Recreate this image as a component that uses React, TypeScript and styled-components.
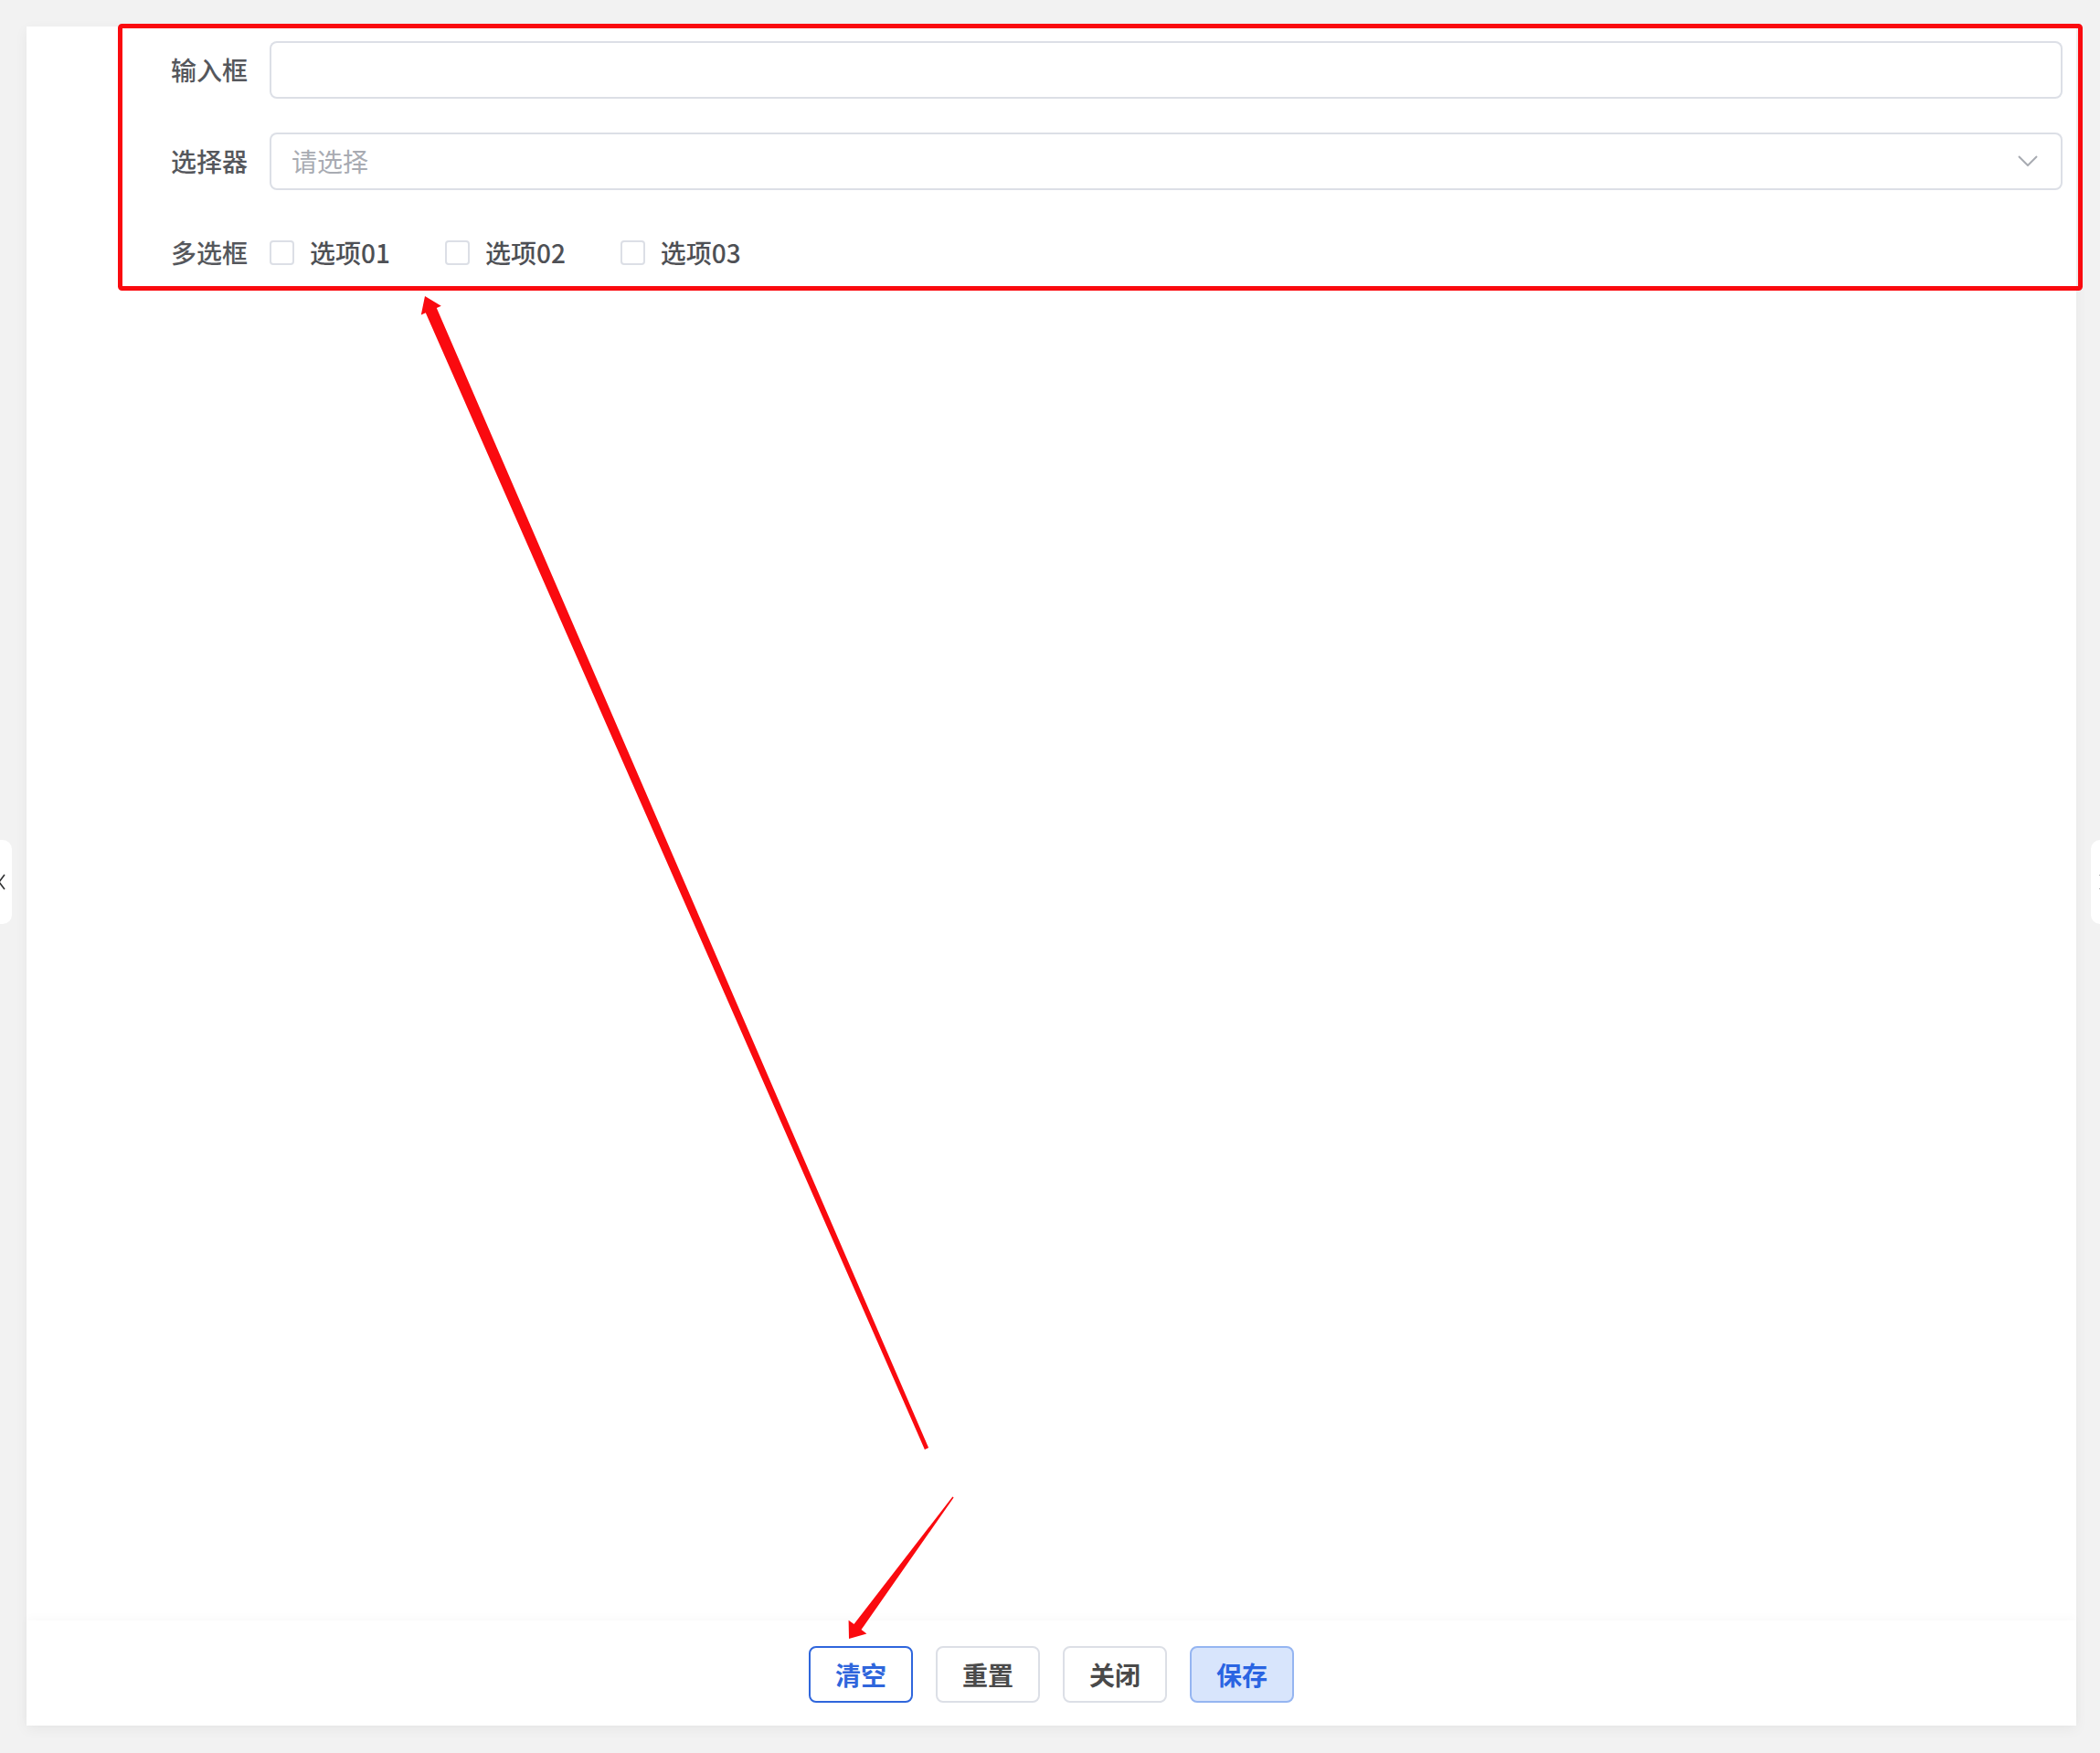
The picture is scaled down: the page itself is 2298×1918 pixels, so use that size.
import * as React from "react"
import styled, { createGlobalStyle } from "styled-components"

const GlobalStyle = createGlobalStyle`
  html, body {
    margin: 0;
    padding: 0;
    background: #f2f2f2;
  }
  * {
    box-sizing: border-box;
  }
  body {
    font-family: "Noto Sans CJK SC", "Noto Sans", sans-serif;
  }
`

const options = ["选项01", "选项02", "选项03"]
const buttons: { text: string; kind: "outline" | "plain" | "soft" }[] = [
  { text: "清空", kind: "outline" },
  { text: "重置", kind: "plain" },
  { text: "关闭", kind: "plain" },
  { text: "保存", kind: "soft" },
]

function App() {
  return (
    <>
      <GlobalStyle />
      <Page>
        <Panel>
          <Body>
            <Form>
              <FormItem>
                <Label>输入框</Label>
                <Field>
                  <Input />
                </Field>
              </FormItem>
              <FormItem>
                <Label>选择器</Label>
                <Field>
                  <Select>
                    <Placeholder>请选择</Placeholder>
                    <svg width="22" height="12" viewBox="0 0 22 12">
                      <path d="M1 1 L11 11 L21 1" fill="none" stroke="#a8abb2" strokeWidth="2" />
                    </svg>
                  </Select>
                </Field>
              </FormItem>
              <FormItem>
                <Label>多选框</Label>
                <Field>
                  <CheckGroup>
                    {options.map((o) => (
                      <CheckItem key={o}>
                        <CheckBox />
                        <CheckText>{o}</CheckText>
                      </CheckItem>
                    ))}
                  </CheckGroup>
                </Field>
              </FormItem>
            </Form>
          </Body>
          <Footer>
            {buttons.map((b) => (
              <Button key={b.text} $kind={b.kind}>
                {b.text}
              </Button>
            ))}
          </Footer>
        </Panel>

        <SideTab $side="left">
          <svg width="8" height="18" viewBox="0 0 8 18">
            <path d="M7 1 L1 9 L7 17" fill="none" stroke="#303133" strokeWidth="1.6" />
          </svg>
        </SideTab>
        <SideTab $side="right">
          <svg width="8" height="18" viewBox="0 0 8 18">
            <path d="M1 1 L7 9 L1 17" fill="none" stroke="#303133" strokeWidth="1.6" />
          </svg>
        </SideTab>

        {/* red annotation drawn over the screenshot */}
        <Annotation viewBox="0 0 2298 1918" width="2298" height="1918">
          <rect x="131.5" y="28.5" width="2145" height="287" rx="2" fill="none" stroke="#fa0a0f" strokeWidth="5" />
          <polygon
            fill="#fa0a0f"
            points="465,324 482.8,334.8 477.8,337 1016.1,1584.1 1011.9,1585.9 465.8,342.2 460.8,344.4"
          />
          <polygon
            fill="#fa0a0f"
            points="929,1793 948.4,1787.4 942.5,1783.1 1043.6,1638.5 1042.4,1637.5 934.5,1777.1 928.6,1772.8"
          />
        </Annotation>
      </Page>
    </>
  )
}

const Page = styled.div`
  position: relative;
  height: 1918px;
  padding: 29px 26px 30px 29px;
  background: #f2f2f2;
  display: flex;
`

const Panel = styled.div`
  flex: 1;
  display: flex;
  flex-direction: column;
  background: #fff;
  box-shadow: 0 4px 14px rgba(0, 0, 0, 0.05);
`

const Body = styled.div`
  flex: 1;
  padding: 15px 15px 0 0;
`

const Form = styled.div`
  display: flex;
  flex-direction: column;
  gap: 36px;
`

const FormItem = styled.div`
  display: flex;
  align-items: center;
  height: 64px;
`

const Label = styled.div`
  width: 266px;
  flex-shrink: 0;
  padding-right: 24px;
  text-align: right;
  font-size: 28px;
  font-weight: 500;
  line-height: 64px;
  color: #55575c;
`

const Field = styled.div`
  flex: 1;
  display: flex;
  align-items: center;
  height: 64px;
`

const Input = styled.div`
  width: 100%;
  height: 63px;
  border-radius: 8px;
  box-shadow: inset 0 0 0 2px #dcdfe6;
  background: #fff;
`

const Select = styled(Input)`
  display: flex;
  align-items: center;
  justify-content: space-between;
  padding: 0 27px 0 24px;
`

const Placeholder = styled.span`
  font-size: 28px;
  color: #a8abb2;
`

const CheckGroup = styled.div`
  display: flex;
  align-items: center;
`

const CheckItem = styled.label`
  display: flex;
  align-items: center;
  margin-right: 60px;
`

const CheckBox = styled.span`
  width: 27px;
  height: 27px;
  border: 2px solid #dcdfe6;
  border-radius: 4px;
  background: #fff;
`

const CheckText = styled.span`
  margin-left: 17px;
  font-size: 28px;
  font-weight: 500;
  color: #4e5055;
`

const Footer = styled.div`
  height: 115px;
  display: flex;
  justify-content: center;
  align-items: flex-start;
  gap: 25px;
  padding-top: 28px;
  box-shadow: 0 -3px 10px rgba(0, 0, 0, 0.025);
`

const kindStyles = {
  outline: "background: #fff; border-color: #2f66dc; color: #2f66dc;",
  plain: "background: #fff; border-color: #dcdfe6; color: #4a4a4a;",
  soft: "background: #d8e5fc; border-color: #95b5f1; color: #2a64e2;",
}

const Button = styled.button<{ $kind: "outline" | "plain" | "soft" }>`
  width: 114px;
  height: 62px;
  border: 2px solid;
  border-radius: 8px;
  font-family: "Noto Sans CJK SC", sans-serif;
  font-size: 28px;
  font-weight: 700;
  display: flex;
  align-items: center;
  justify-content: center;
  padding: 0;
  ${(p) => kindStyles[p.$kind]}
`

const SideTab = styled.div<{ $side: "left" | "right" }>`
  position: fixed;
  top: 919px;
  ${(p) => (p.$side === "left" ? "left: -28px;" : "left: 2288px;")}
  width: 41px;
  height: 92px;
  border-radius: 10px;
  background: #fff;
  display: flex;
  align-items: center;
  justify-content: ${(p) => (p.$side === "left" ? "flex-end" : "flex-start")};
  padding: ${(p) => (p.$side === "left" ? "0 7px 0 0" : "0 0 0 9px")};
`

const Annotation = styled.svg`
  position: absolute;
  left: 0;
  top: 0;
  pointer-events: none;
`

export default App
